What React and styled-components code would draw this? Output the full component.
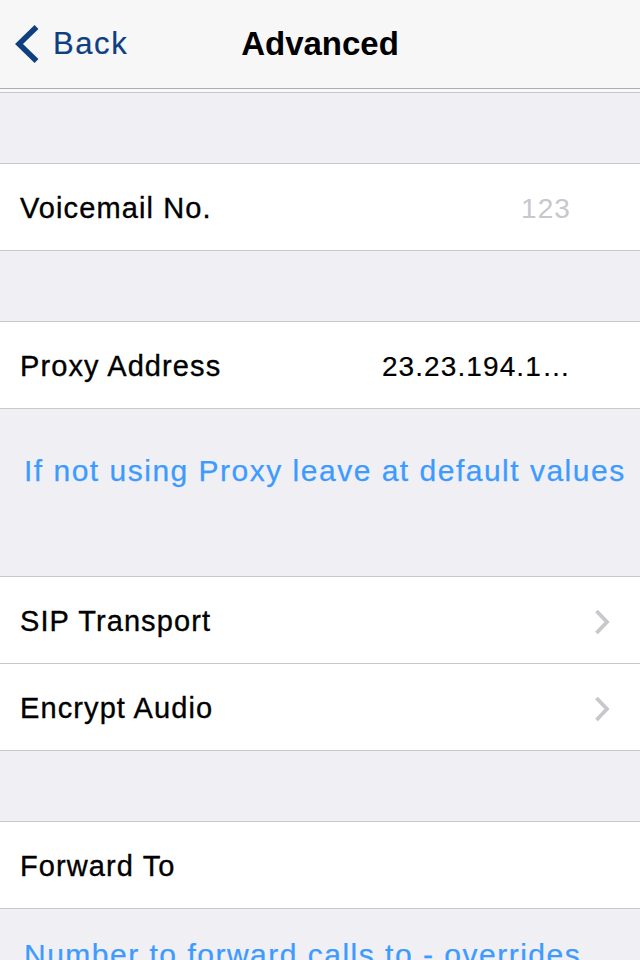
import React from "react";
import styled, { createGlobalStyle } from "styled-components";

const GlobalStyle = createGlobalStyle`
  html, body { margin: 0; padding: 0; background: #efeff4; }
  body { font-family: "Liberation Sans", Arial, Helvetica, sans-serif; -webkit-font-smoothing: antialiased; }
  * { box-sizing: border-box; }
`;

const Screen = styled.div`
  width: 640px;
  height: 960px;
  overflow: hidden;
  background: #efeff4;
  display: flex;
  flex-direction: column;
`;

const NavBar = styled.header`
  flex: none;
  height: 89px;
  display: grid;
  grid-template-columns: 1fr auto 1fr;
  align-items: center;
  background: #f7f7f7;
  border-bottom: 1px solid #aeaeb2;
`;

const BackButton = styled.div`
  display: flex;
  align-items: center;
  gap: 13px;
  padding-left: 14px;
  color: #0e3f7f;
  font-size: 31px;
  letter-spacing: 1.6px;
  -webkit-text-stroke: 0.2px #0e3f7f;
`;

const Title = styled.h1`
  margin: 0;
  font-size: 33px;
  font-weight: bold;
  color: #000;
  letter-spacing: 0;
`;

const Strip = styled.div`
  flex: none;
  height: 3px;
  background: #f8f8f8;
`;

const Spacer = styled.div`
  flex: none;
  height: ${(p) => p.$h}px;
  border-top: ${(p) => (p.$line ? "1px solid #c8c7cc" : "none")};
  background: #efeff4;
`;

const Group = styled.section`
  flex: none;
  background: #fff;
  border-top: 1px solid #c8c7cc;
  border-bottom: 1px solid #c8c7cc;
`;

const Row = styled.div`
  position: relative;
  height: ${(p) => p.$h || 86}px;
  display: flex;
  align-items: center;
  padding-top: 3px;
  padding-left: 20px;
  padding-right: ${(p) => (p.$chevron ? "30px" : "69px")};
  & + & {
    border-top: 1px solid #c8c7cc;
  }
  & + &::before {
    content: "";
    position: absolute;
    top: -1px;
    left: 0;
    width: 30px;
    height: 1px;
    background: #fff;
  }
`;

const Label = styled.span`
  flex: 1;
  font-size: 29px;
  letter-spacing: 1.1px;
  color: #000;
  white-space: nowrap;
  -webkit-text-stroke: 0.35px #000;
`;

const Value = styled.span`
  font-size: 28px;
  letter-spacing: 1.1px;
  color: ${(p) => (p.$placeholder ? "#c7c7cd" : "#000")};
  white-space: nowrap;
  -webkit-text-stroke: ${(p) => (p.$placeholder ? "0" : "0.2px #000")};
`;

const Footer = styled.div`
  flex: none;
  height: ${(p) => (p.$h ? `${p.$h}px` : "auto")};
  padding: ${(p) => p.$pt}px 4px 0 24px;
  color: #3d9bfe;
  font-size: 30px;
  line-height: 36px;
  letter-spacing: 1.5px;
  -webkit-text-stroke: 0.25px #3d9bfe;
`;

const OneLine = styled.span`
  white-space: nowrap;
`;

const Chevron = () => (
  <svg width="16" height="26" viewBox="0 0 16 26" aria-hidden="true">
    <path d="M2.5 2 L13 13 L2.5 24" fill="none" stroke="#c7c7cc" strokeWidth="3.8" strokeLinecap="butt" strokeLinejoin="miter" />
  </svg>
);

const BackChevron = () => (
  <svg width="26" height="38" viewBox="0 0 26 38" aria-hidden="true">
    <path d="M22.5 2 L5 19 L22.5 36" fill="none" stroke="#0e3f7f" strokeWidth="5.5" strokeLinecap="butt" strokeLinejoin="miter" />
  </svg>
);

export default function App() {
  return (
    <>
      <GlobalStyle />
      <Screen>
        <NavBar>
          <BackButton>
            <BackChevron />
            <span>Back</span>
          </BackButton>
          <Title>Advanced</Title>
          <div />
        </NavBar>
        <Strip />
        <Spacer $h={71} $line />
        <Group>
          <Row>
            <Label>Voicemail No.</Label>
            <Value $placeholder>123</Value>
          </Row>
        </Group>
        <Spacer $h={70} />
        <Group>
          <Row>
            <Label>Proxy Address</Label>
            <Value>23.23.194.1…</Value>
          </Row>
        </Group>
        <Footer $h={167} $pt={44}>
          <OneLine>If not using Proxy leave at default values</OneLine>
        </Footer>
        <Group>
          <Row $chevron>
            <Label>SIP Transport</Label>
            <Chevron />
          </Row>
          <Row $chevron $h={87}>
            <Label>Encrypt Audio</Label>
            <Chevron />
          </Row>
        </Group>
        <Spacer $h={70} />
        <Group>
          <Row>
            <Label>Forward To</Label>
          </Row>
        </Group>
        <Footer $pt={28}>Number to forward calls to - overrides incoming call handling</Footer>
      </Screen>
    </>
  );
}
